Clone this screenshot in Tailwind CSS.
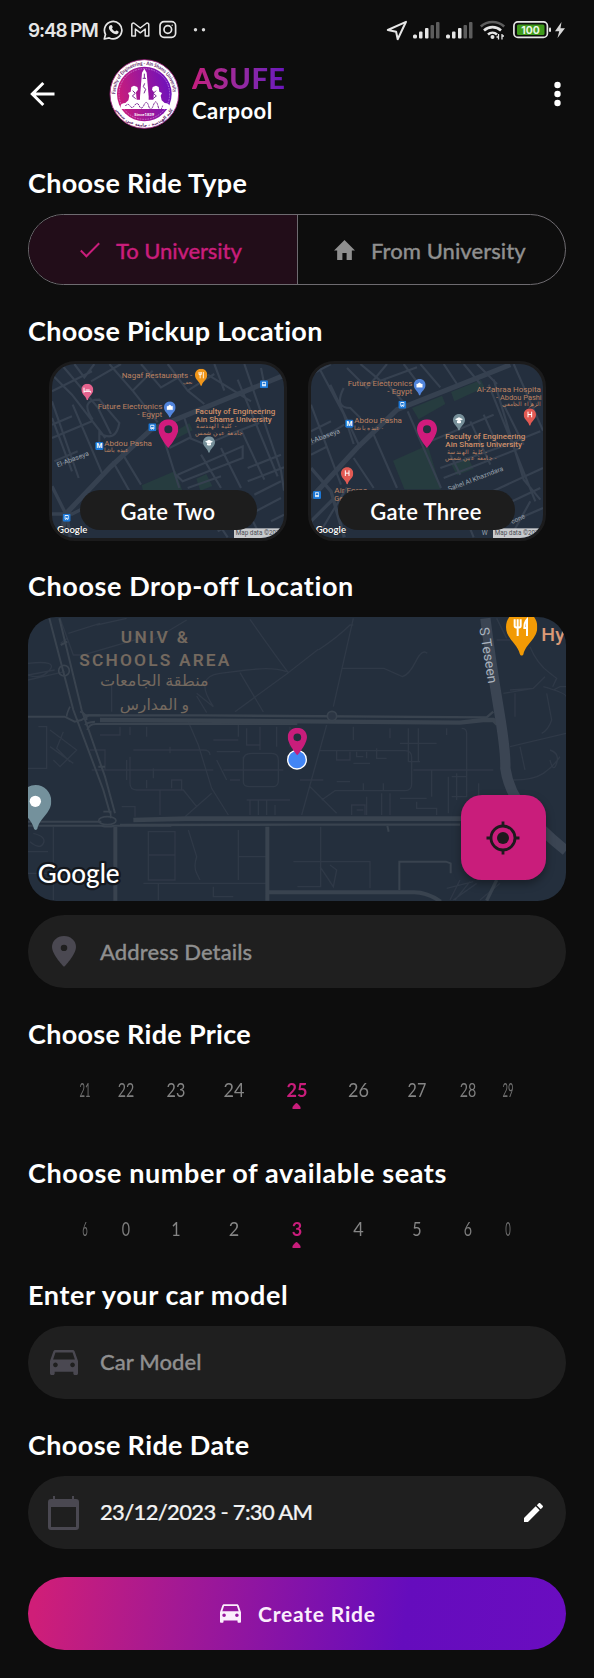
<!DOCTYPE html>
<html lang="en">
<head>
<meta charset="utf-8">
<title>ASUFE Carpool</title>
<script src="https://cdn.jsdelivr.net/npm/@tailwindcss/browser@4"></script>
</head>
<body class="bg-[#0d0d0d] text-white font-['Lato','Noto_Sans',sans-serif]">
<svg class="absolute" width="0" height="0" aria-hidden="true">
  <defs>
    <linearGradient id="brand" x1="0" x2="1" y1="0.2" y2="0"><stop offset="0" stop-color="#c51c7e"/><stop offset="1" stop-color="#6510c2"/></linearGradient>
    <symbol id="pin" viewBox="0 0 60 86"><path fill-rule="evenodd" d="M30 0C13 0 0 13 0 29c0 22 30 57 30 57s30-35 30-57C60 13 47 0 30 0Zm0 18a12 12 0 1 1 0 24 12 12 0 0 1 0-24Z"/></symbol>
    <symbol id="poi" viewBox="0 0 36 50"><path d="M18 0C8 0 0 8 0 18c0 13 13 18 16 30 .6 2 3.400 2 4 0C23 36 36 31 36 18 36 8 28 0 18 0Z"/></symbol>
    <symbol id="car" viewBox="3 5 18 16"><path d="M18.920 6.010C18.720 5.420 18.160 5 17.500 5h-11c-.66 0-1.210.42-1.420 1.010L3 12v8c0 .55.45 1 1 1h1c.55 0 1-.45 1-1v-1h12v1c0 .55.45 1 1 1h1c.55 0 1-.45 1-1v-8l-2.080-5.990zM6.500 16c-.83 0-1.500-.67-1.500-1.500S5.670 13 6.500 13s1.500.67 1.500 1.500S7.330 16 6.500 16zm11 0c-.83 0-1.500-.67-1.500-1.500s.67-1.500 1.500-1.500 1.500.67 1.500 1.500-.67 1.500-1.500 1.500zM5 11l1.500-4.500h11L19 11H5z"/></symbol>
    <symbol id="bus" viewBox="0 0 24 24"><rect width="24" height="24" rx="4" fill="#1d78d6"/><path fill="#e8f2ff" fill-rule="evenodd" d="M6 6q0-2 2-2h8q2 0 2 2v11h-2v2h-2v-2h-4v2H8v-2H6ZM8 7v5h8V7ZM8 14v1h2v-1Zm6 0v1h2v-1Z"/></symbol>
  </defs>
</svg>

<div class="flex flex-col w-[594px] h-[1678px] px-7 overflow-hidden">
  <!-- status bar -->
  <div class="flex justify-between h-[59px] shrink-0">
    <div class="flex pt-[20px] h-[42px] items-center">
      <span class="font-['Inter'] font-semibold text-[19px] leading-6 text-[#e6e6e6] w-[75px] whitespace-nowrap tracking-[-1.150px]">9:48 PM</span>
      <svg class="-mt-[2px]" width="108" height="24" viewBox="0 0 108 24" fill="none" stroke="#e6e6e6" stroke-width="1.700" stroke-linejoin="round" stroke-linecap="round">
        <path d="M1.300 21l1.200-4.700A8.700 8.700 0 1 1 6.200 19.900Z"/>
        <path fill="#e6e6e6" stroke="none" d="M7.400 7.300c1-.8 1.500-.2 2.200 1.400.4.900-.7 1.500-.6 1.900.7 1.400 1.700 2.300 3.100 2.900.4 0 1-1.200 1.500-1 2 .8 2.200 1.200 2 1.700-.9 3.500-5.200 1.800-7.400-.4-2.200-2.100-3.500-5-.8-6.500Z"/>
        <path stroke-width="1.500" d="M28.800 18V6.600c0-1.400 1.700-2 2.700-1.100L37.300 10l5.800-4.500c1-.9 2.700-.3 2.700 1.100V18h-3.600V11l-4.900 3.800L32.400 11v7Z"/>
        <rect x="57" y="3.700" width="15.600" height="15.600" rx="4"/><circle cx="64.800" cy="11.500" r="3.800"/><circle cx="69.200" cy="7.200" r=".7" fill="#e6e6e6" stroke="none"/>
        <g fill="#d8d8d8" stroke="none"><circle cx="92.500" cy="11.700" r="1.700"/><circle cx="100.500" cy="11.700" r="1.700"/></g>
      </svg>
    </div>
    <svg class="mt-[18px]" width="180" height="24" viewBox="386 18 180 24">
      <path d="M387.800 30 406 21.800l-8.300 17.400-1.600-7.500Z" fill="none" stroke="#e6e6e6" stroke-width="2" stroke-linejoin="round"/>
      <g fill="#e6e6e6"><rect x="413" y="34.500" width="4" height="4" rx="1.500"/><rect x="419" y="31.500" width="3.500" height="7" rx="1"/><rect x="425" y="28" width="3.500" height="10.500" rx="1"/><g fill="#5d5d5d"><rect x="430.500" y="25" width="3.500" height="13.500" rx="1"/><rect x="436" y="22" width="3.500" height="16.500" rx="1"/></g></g>
      <g fill="#e6e6e6"><rect x="446" y="34.500" width="4" height="4" rx="1.500"/><rect x="452" y="31.500" width="3.500" height="7" rx="1"/><rect x="458" y="28" width="3.500" height="10.500" rx="1"/><g fill="#5d5d5d"><rect x="463.500" y="25" width="3.500" height="13.500" rx="1"/><rect x="469" y="22" width="3.500" height="16.500" rx="1"/></g></g>
      <g fill="none" stroke-width="2.600"><path stroke="#5d5d5d" d="M480.800 26.500a17.500 17.500 0 0 1 23.400 0"/><path stroke="#e6e6e6" d="M484 30.500a12.500 12.500 0 0 1 17 0M488 34.400a7 7 0 0 1 9 0"/></g>
      <circle cx="492.500" cy="37" r="2" fill="#e6e6e6"/><path stroke="#e6e6e6" stroke-width="1.300" d="M498.500 34v5.500M502 34v5.500M496.500 37h2M502 36h2"/>
      <rect x="513.900" y="21.900" width="33.500" height="15.500" rx="4" fill="none" stroke="#e6e6e6" stroke-width="1.700"/>
      <rect x="517" y="24.500" width="27.500" height="10.500" rx="1.500" fill="#3f9a1c"/><rect x="549" y="27.500" width="2" height="4.500" rx="1" fill="#e6e6e6"/>
      <text x="530.500" y="33.900" font-family="Inter" font-weight="700" font-size="11" text-anchor="middle" textLength="18.500" lengthAdjust="spacingAndGlyphs" fill="#e9f6e2">100</text>
      <path fill="#d8d8d8" d="M561.500 22 555 31.200h4.200L557.500 38l7.500-9.700h-4.500Z"/>
    </svg>
  </div>

  <!-- app bar -->
  <header class="flex items-center h-[70px] shrink-0">
    <svg width="28" height="28" viewBox="28 80 28 28" fill="none" stroke="#fff" stroke-width="3"><path d="M54.500 94H33M43.300 83 32.300 94l11 11"/></svg>
    <svg class="ml-[53px]" width="71" height="70" viewBox="327 177 213 210">
      <defs><path id="arcTop" d="M346 282a87 87 0 0 1 174 0"/><path id="arcBot" d="M335 282a98 98 0 0 0 196 0"/></defs>
      <circle cx="433" cy="282" r="103" fill="#fff" stroke="#a01f7f" stroke-width="2.500"/>
      <circle cx="433" cy="282" r="82" fill="url(#brand)"/>
      <circle cx="433" cy="282" r="76" fill="none" stroke="#e5b8ee" stroke-width="1.500" stroke-dasharray="5 3"/>
      <g font-family="Lato" font-weight="700" font-size="15" fill="#5b1a66">
        <text textLength="268" lengthAdjust="spacingAndGlyphs"><textPath href="#arcTop" textLength="268" lengthAdjust="spacingAndGlyphs">Faculty of Engineering - Ain Shams University</textPath></text>
        <g font-family="DejaVu Sans" font-size="13"><text><textPath href="#arcBot" startOffset="154" text-anchor="middle">كلية الهندسة - جامعة عين شمس</textPath></text></g>
      </g>
      <path fill="#fff" d="M433 206l7 12 6 72v12h-26v-12l6-72Z"/>
      <path fill="#fff" d="M362 327v-10q2-7 14-8l9-8 3-14-4-8 8-4 2-14 8-4 10 4 2 8-6 8 2 22h50l2-22-6-8 2-8 10-4 8 4 2 14 8 4-4 8 3 14 9 8q12 1 14 8v10Z"/>
      <g fill="none" stroke="#7a2a94" stroke-width="3"><path d="M433 221v14M428 235h10M434 250l-4 10 7 8-5 12M398 272l8 8-9 8 10 8M468 272l-8 8 9 8-10 8"/><path d="M376 318q8-10 14 0t14-2 14 2 14-3 14 3 14-2 14 2 14-1" stroke-dasharray="7 2"/></g>
      <text x="433" y="348" font-family="Lato" font-weight="700" font-size="13" text-anchor="middle" fill="#fff" textLength="60">Since1839</text>
    </svg>
    <div class="ml-3 h-full flex flex-col">
      <span class="self-start h-[36px] leading-[38px] text-[29px] font-black tracking-[0.5px] bg-linear-to-r from-[#c51c7e] to-[#6a12bd] bg-clip-text text-transparent">ASUFE</span>
      <span class="self-start leading-7 text-[22px] font-bold mt-[2px] tracking-[0.5px]">Carpool</span>
    </div>
    <svg class="ml-auto mr-[4px]" width="9" height="28" viewBox="0 0 9 28" fill="#fff"><circle cx="4.500" cy="5" r="3.200"/><circle cx="4.500" cy="14" r="3.200"/><circle cx="4.500" cy="23" r="3.200"/></svg>
  </header>

  <h2 class="mt-[35px] h-9 leading-[38px] text-[27px] font-bold shrink-0 tracking-[0.3px]">Choose Ride Type</h2>
  <div class="mt-[14px] h-[71px] shrink-0 rounded-full border-[1.500px] border-[#6e6b70] overflow-hidden grid grid-cols-[269px_1fr] text-[22px] leading-7 font-medium [-webkit-text-stroke:0.3px]">
    <div class="flex items-center bg-[#220d19] text-[#c91d7b] border-r-[1.500px] border-[#6e6b70] pl-[51px] gap-[16px]">
      <svg width="20" height="16" viewBox="0 0 20 16" fill="none" stroke="currentColor" stroke-width="2"><path d="M.8 8.500l5.600 5.700L19.200 1.200"/></svg>
      <span class="mt-[2px] tracking-[-0.1px]">To University</span>
    </div>
    <div class="flex items-center text-[#8f8f8f] pl-[36px] gap-[16px]">
      <svg width="21" height="20" viewBox="2 3 20 17" preserveAspectRatio="none" fill="currentColor"><path d="M10 20v-6h4v6h5v-8h3L12 3 2 12h3v8z"/></svg>
      <span class="mt-[2px] tracking-[0.05px]">From University</span>
    </div>
  </div>

  <h2 class="mt-[27px] h-9 leading-[38px] text-[27px] font-bold shrink-0 tracking-[0.3px]">Choose Pickup Location</h2>
  <div class="mt-[13px] h-[180px] shrink-0 flex gap-[21px] pl-[20.5px]">
    <div class="relative w-[238px] rounded-[26px] border-[3px] border-[#1b1b1c] overflow-hidden bg-[#242f3e]">
      <svg class="block" width="232" height="174" viewBox="33 28 696 522" font-family="Roboto" font-size="22">
        <g fill="#263c3f"><path d="M302 392l102-44 20 60H306Z"/><path d="M395 235l50-30 10 22-52 26Z"/><path d="M466 372l30-14 18 36-36 14Z"/></g>
        <g fill="none" stroke="#364150" stroke-width="6.500">
          <path stroke-width="15" d="M60 548L74 478 210 335 330 225 729 62"/><path stroke-width="10" d="M33 395l45 90 10 63M33 478h60l80-40"/>
          <path d="M33 60l60 60 100 130M60 28l110 130 40 80M100 28l30 40 30-40M33 110l120-60M150 80l90-52M205 28l70 80 60-60M275 108l75 95M300 28l60 70 70-40M380 28l60 80 80-50M440 108l50 40M520 28l30 80M610 28l110 320 9 60M590 75l120 290M660 40l10 50M33 140l80 230M33 190l60 160M95 150l90 210M155 195q-40-60 20-60l60 70q-10 60-60 30v30M215 320l50 88M240 290l60 100M355 210l60 190M430 190l20 60M385 280l60-30 50 20 80-35 80-30M500 60l130 80M410 360l195-85v35l-180 70-20-20M480 300l60 100M540 280l60 120M600 225l70 150M620 340l100-40M620 380l109-42M440 400l100-35M640 420l80-40M530 530l190-100M560 548l-40-60M660 548l-40-80M690 500l39-20"/>
          <path d="M33 250l120-50M33 210l60-25M40 320l70-30"/>
        </g>
        <g fill="#bd8262"><text x="242" y="70" textLength="212" lengthAdjust="spacingAndGlyphs">Nagaf Restaurants -</text><text x="426" y="88" font-size="15">نجف</text>
          <text x="170" y="163" textLength="194" lengthAdjust="spacingAndGlyphs">Future Electronics</text><text x="289" y="187" textLength="75" lengthAdjust="spacingAndGlyphs">- Egypt</text>
          <text x="190" y="273" textLength="143" lengthAdjust="spacingAndGlyphs">Abdou Pasha</text><text x="190" y="292" font-size="17" textLength="74">عبده باشا</text>
          <g fill="#d08f69" font-weight="500"><text x="463" y="177" textLength="240" lengthAdjust="spacingAndGlyphs">Faculty of Engineering</text><text x="463" y="201" textLength="229" lengthAdjust="spacingAndGlyphs">Ain Shams University</text></g>
          <text x="466" y="221" font-size="18" textLength="120">كلية الهندسة -</text><text x="461" y="241" font-size="18" textLength="146">جامعة عين شمس</text></g>
        <text x="50" y="338" transform="rotate(-21 50 338)" fill="#9aa3ae" font-size="20" textLength="102" lengthAdjust="spacingAndGlyphs">El-Abaseya</text>
        <use href="#poi" x="121" y="87" width="36" height="50" fill="#e5638e"/><path d="M129 99v15M129 110h20v4M134 106h12" stroke="#fff" stroke-width="3" fill="none"/>
        <use href="#poi" x="462" y="42" width="37" height="52" fill="#f0961a"/><path d="M474 52v8h7v-8M477.500 52v19M487 71V52" stroke="#fff" stroke-width="2.500" fill="none"/>
        <use href="#poi" x="369" y="140" width="35" height="50" fill="#5184dc"/><path d="M378 155h17v10h-17zM382 155q4-8 9 0" fill="#fff" stroke="#fff"/>
        <use href="#poi" x="486" y="245" width="36" height="50" fill="#77909a"/><path d="M492 261l12-6 12 6-12 6zM498 266v5q6 3 12 0v-5" fill="#fff"/>
        <use href="#bus" x="322" y="206" width="24" height="24"/><use href="#bus" x="657" y="77" width="24" height="24"/><use href="#bus" x="65" y="477" width="24" height="24"/>
        <rect x="163" y="262" width="24" height="24" rx="4" fill="#1d78d6"/><text x="175" y="281" font-weight="700" font-size="20" text-anchor="middle" fill="#fff">M</text>
        <use href="#pin" x="352" y="194" width="60" height="86" fill="#d11b7c"/>
        <text x="48" y="535" font-family="Lato" font-weight="600" font-size="28" fill="#fff" stroke="#20262e" stroke-width="3" paint-order="stroke" textLength="91" lengthAdjust="spacingAndGlyphs">Google</text>
        <rect x="579" y="521" width="150" height="29" fill="#c9cbce"/><text x="584" y="542" font-size="19" fill="#4c4f54" textLength="132" lengthAdjust="spacingAndGlyphs">Map data ©202</text>
      </svg>
      <div class="absolute left-[28px] top-[126px] w-[177px] h-10 rounded-full bg-[#1d1d1d] flex items-center justify-center text-[22px] font-semibold tracking-[0.3px]"><span class="mt-[2px]">Gate Two</span></div>
    </div>
    <div class="relative w-[238px] rounded-[26px] border-[3px] border-[#1b1b1c] overflow-hidden bg-[#242f3e]">
      <svg class="block" width="232" height="174" viewBox="42 28 696 522" font-family="Roboto" font-size="22">
        <g fill="#263c3f"><path d="M288 318l104-46 40 132H322Z"/><path d="M345 160l90-37 10 25-80 46Z"/><path d="M462 112l90-36 10 22-90 42Z"/><path d="M462 328l50-20 18 34-50 20Z"/></g>
        <g fill="none" stroke="#364150" stroke-width="6.500">
          <path stroke-width="15" d="M42 430L180 280 300 165 560 62 640 30"/><path stroke-width="10" d="M42 340l60 70 40 138M42 500l70-70"/>
          <path d="M60 28l80 150 30 90M100 90l90 190M42 60l60-32M150 40l60 60 60-72M42 150l90 240M42 230l60-30M140 100q-30 60 20 60l30 30M190 28l60 50 110-40M260 75l70 80M320 28l60 80M370 28l60 70M440 28l40 60M500 28l50 60M540 28l60 60M590 75l90 300 50 60M575 90l140 350M650 28l88 200M332 170l100 230M230 240l70 160M170 310l60 90M400 260l190-80M430 340l200-70 100-40M440 370l230-90M460 300l30 60M520 200l60 130M560 180l40 90M620 150l60 120M500 450l238-110M540 490l190-90M600 520l138-60M470 400l60 148M700 440l-60 108M42 270l100-60M42 300l50-25M60 548l90-150"/>
        </g>
        <g fill="#bd8262"><text x="152" y="95" textLength="194" lengthAdjust="spacingAndGlyphs">Future Electronics</text><text x="271" y="118" textLength="75" lengthAdjust="spacingAndGlyphs">- Egypt</text>
          <text x="539" y="112" textLength="193" lengthAdjust="spacingAndGlyphs">Al-Zahraa Hospita</text><text x="597" y="135" textLength="137" lengthAdjust="spacingAndGlyphs">- Abdou Pashi</text><text x="614" y="155" font-size="17" textLength="119">الزهراء الجامعي</text>
          <text x="172" y="206" textLength="143" lengthAdjust="spacingAndGlyphs">Abdou Pasha</text><text x="172" y="225" font-size="17" textLength="86">عبده باشا -</text>
          <g fill="#d08f69" font-weight="500"><text x="445" y="254" textLength="240" lengthAdjust="spacingAndGlyphs">Faculty of Engineering</text><text x="445" y="278" textLength="230" lengthAdjust="spacingAndGlyphs">Ain Shams University</text></g>
          <text x="450" y="298" font-size="18" textLength="120">كلية الهندسة -</text><text x="443" y="317" font-size="18" textLength="155">جامعة عين شمس -</text>
          <text x="112" y="414" textLength="98" lengthAdjust="spacingAndGlyphs">Air Force</text><text x="112" y="438">Ge</text></g>
        <g fill="#9aa3ae" font-size="20"><text x="44" y="266" transform="rotate(-20 44 266)" textLength="92" lengthAdjust="spacingAndGlyphs">l-Abaseya</text><text x="456" y="410" transform="rotate(-21 456 410)" textLength="176" lengthAdjust="spacingAndGlyphs">Sahel Al Khazndara</text><text x="646" y="508" transform="rotate(-25 646 508)">cone</text><text x="554" y="540">W</text></g>
        <use href="#poi" x="350" y="73" width="36" height="50" fill="#5184dc"/><path d="M359 88h17v10h-17zM363 88q4-8 9 0" fill="#fff" stroke="#fff"/>
        <use href="#poi" x="468" y="178" width="36" height="50" fill="#77909a"/><path d="M474 194l12-6 12 6-12 6zM480 199v5q6 3 12 0v-5" fill="#fff"/>
        <use href="#poi" x="680" y="161" width="37" height="53" fill="#e25a53"/><use href="#poi" x="132" y="337" width="37" height="53" fill="#e25a53"/>
        <path d="M693 171v17M704 171v17M693 179.500h11M145 347v17M156 347v17M145 355.500h11" stroke="#fff" stroke-width="3"/>
        <use href="#bus" x="304" y="138" width="24" height="24"/><use href="#bus" x="48" y="409" width="24" height="24"/>
        <rect x="145" y="195" width="24" height="24" rx="4" fill="#1d78d6"/><text x="157" y="214" font-weight="700" font-size="20" text-anchor="middle" fill="#fff">M</text>
        <use href="#pin" x="360" y="194" width="60" height="86" fill="#d11b7c"/>
        <text x="56" y="535" font-family="Lato" font-weight="600" font-size="28" fill="#fff" stroke="#20262e" stroke-width="3" paint-order="stroke" textLength="91" lengthAdjust="spacingAndGlyphs">Google</text>
        <rect x="588" y="521" width="150" height="29" fill="#c9cbce"/><text x="593" y="542" font-size="19" fill="#4c4f54" textLength="132" lengthAdjust="spacingAndGlyphs">Map data ©202</text>
      </svg>
      <div class="absolute left-[27px] top-[126px] w-[177px] h-10 rounded-full bg-[#1d1d1d] flex items-center justify-center text-[22px] font-semibold tracking-[0.4px]"><span class="mt-[2px]">Gate Three</span></div>
    </div>
  </div>

  <h2 class="mt-[26px] h-9 leading-[38px] text-[27px] font-bold shrink-0 tracking-[0.6px]">Choose Drop-off Location</h2>
  <div class="relative mt-[14px] h-[284px] shrink-0 rounded-[28px] overflow-hidden bg-[#242f3d]">
    <svg class="block" width="538" height="284" viewBox="84 171 1614 852">
      <g fill="none" stroke="#2f3947" stroke-width="4">
        <path d="M205 220l95-30M182 250l20-15M180 175l40 110h30l170-50M380 175l-90 20M560 180l-100 60M750 178q70 100 115 160l90-70M865 338L705 455M720 338l70 118M590 400l50 40q-60-90 20-100l80-10q80-10 120 5M84 345l80-15M84 310q90-10 65 20t-65 15M84 360l110-25M335 375v80M590 408l30 50"/>
        <path d="M955 270q60-40 95-75h10M1060 175L1000 440M1027 325h125l55 25q20-5 40-45t35-25"/>
        <path d="M115 500h25v125H84M150 510l80 60-50 50-20-20M190 515l-20 50 40 40M150 560l70 50M565 485l30 70 40 130 50 80M270 570h45v60h-40M310 630h330M400 570h210q20 0 20 15M390 590v80q0 20 20 20h140l40 50M480 690v75M635 700l-80 70M380 600v60M440 500v30M390 500v25M510 560v20M440 660v25M460 625v30M515 685v-25h30v30M300 525h60v-25M640 540h75M715 490v40M730 590v75q0 15 20 15h70q15 0 15-20v-60q0-20-20-20h-60q-25 0-25 20M650 575h70M670 630h180M690 660h30M780 500v70M830 500v60M740 505v50h40M750 720v45M775 720v45M800 720v45M825 735v30M740 720h130M870 500v60M650 600l30 60M365 740h40v30"/>
        <path d="M980 495L905 765M930 680l80 80M965 720l40-28h210q20 0 20-20v-80q0-20-20-20H960M900 660h70M1060 500v40M1170 505v30M1225 505v100M1255 505v100M1340 505v20M1200 550h110M1225 605h35M1240 630h240M1295 630v80M1345 650v110M1385 505q15 0 15 15v190M1355 650h45v60h-45M1370 640v80M1010 570v30h40v-25M1070 575v15h20M1100 575v20M1130 565v30h30M1060 610h50M1170 700v65M1145 700v65M1100 710v55M1055 765v-30h40v30M1070 750h20M1250 725v20h60v20M1200 715h80M1010 665h40M1090 670v20M1150 670v20M1436 670v40"/>
        <path d="M445 815h80v145h-80ZM445 885h80M565 810l25 80q-10 30 0 50l10 20M715 810v80h85M715 890v70M160 800v220M84 875h60M100 820q40 10 30 30t-40-5M430 970h370M475 970v50M640 980v30h60M84 940h80M962 800v180h-70M880 905h230v80M960 920l40 60 10-50-20-15"/>
        <path d="M1490 240h40M1490 175l30 60M1590 260q20 50 60 80l20 15-12 25M1510 400l90-15 35-35M1545 400v70M1600 385l-70 5M1630 380q70 20 68 30M1640 400l15 80q-10 30-30 40M1530 560l168-40M1560 560l15 70M1650 570q30 10 20 40t-20-10M1540 660q60 0 90-20t50-50M1660 390l20-10h20M1380 960l-30 60M1410 965l-45 55M1430 970l-70 50M1500 970l-60 50M1340 985l80-20"/>
      </g>
      <g fill="none" stroke="#39434f">
        <path stroke-width="6" d="M148 175L220 450 310 690 330 760M178 175L245 450 315 650 345 760M182 255l20-10M295 620h20M84 470h110l30 15 20-5 22-14H300M84 785h220M84 797h220q20 5 40 0h170"/>
        <path stroke-width="6" d="M255 495q5-8 30-10M262 510q5-20 30-18h600"/>
        <circle cx="192" cy="332" r="16" stroke-width="5"/><ellipse cx="322" cy="782" rx="26" ry="12" stroke-width="5"/><path stroke-width="5" d="M310 755h22v20M210 440q-10 20-10 30M240 455q20 5 20 25"/>
        <path stroke-width="7" d="M250 466H600L1460 472 1480 455"/><path stroke-width="13" d="M300 480L900 484 1380 488 1450 480h30l12 12"/>
        <path stroke-width="7" d="M360 795L900 794H1380"/><path stroke-width="14" d="M400 780L560 776H1390"/><circle cx="996" cy="468" r="14" fill="#2c3644" stroke-width="5"/>
        <path stroke-width="12" d="M346 800v222M802 800v222M802 997h440q40 0 80 28"/><path stroke-width="6" d="M1162 797l4 18M1198 990v-85h140l14 5v30"/><path stroke-width="10" d="M1490 960l-30 62"/>
      </g>
      <path d="M1456 175q18 140 40 270t20 180q10 70 60 130t122 117" fill="none" stroke="#3b4553" stroke-width="31"/>
      <g font-family="Roboto" font-weight="600" font-size="52" fill="#74695f" text-anchor="middle"><text x="463" y="250" textLength="202">UNIV &amp;</text><text x="463" y="319" textLength="450">SCHOOLS AREA</text>
        <g font-family="'Noto Sans','DejaVu Sans'" font-weight="400" font-size="46"><text x="463" y="378" textLength="326" lengthAdjust="spacingAndGlyphs">منطقة الجامعات</text><text x="463" y="450" textLength="208" lengthAdjust="spacingAndGlyphs">و المدارس</text></g></g>
      <text x="1438" y="204" transform="rotate(81 1438 204)" font-family="Roboto" font-size="41" fill="#a9b2bd" textLength="170" lengthAdjust="spacingAndGlyphs">S Teseen</text>
      <svg x="1518" y="152" width="94" height="136" viewBox="0 0 36 50" preserveAspectRatio="none" fill="#f29a05"><use href="#poi" width="36" height="50"/></svg>
      <path d="M1544 178v20q0 5 9 5t9-5v-20M1553 178v50M1581 228v-50q-8 8-8 26h6" fill="none" stroke="#fff" stroke-width="6"/>
      <text x="1624" y="242" font-family="Roboto" font-weight="500" font-size="56" fill="#dc9a77" textLength="70" lengthAdjust="spacingAndGlyphs">Hy</text>
      <svg x="60" y="675" width="94" height="136" viewBox="0 0 36 50" preserveAspectRatio="none" fill="#74919c"><use href="#poi" width="36" height="50"/></svg><circle cx="106" cy="724" r="17" fill="#fff"/>
      <circle cx="891" cy="599" r="28" fill="#4285f4" stroke="#fff" stroke-width="4"/>
      <use href="#pin" x="863" y="503" width="58" height="83" fill="#c91d7b"/>
      <text x="113" y="968" font-family="Lato" font-weight="500" font-size="80" fill="#fff" stroke="#14181e" stroke-width="14" stroke-linejoin="round" paint-order="stroke" textLength="246" lengthAdjust="spacingAndGlyphs">Google</text>
    </svg>
    <div class="absolute right-[20.5px] bottom-[21px] w-[85px] h-[85px] rounded-[21px] bg-[#c91d7b] flex items-center justify-center shadow-[0_4px_8px_rgba(0,0,0,0.35)]">
      <svg width="34" height="34" viewBox="0 0 34 34" fill="none" stroke="#1d1a1d" stroke-width="2.800"><circle cx="17" cy="17" r="12"/><circle cx="17" cy="17" r="6" fill="#1d1a1d" stroke="none"/><path d="M17 .5V5M17 29v4.500M.5 17H5M29 17h4.500"/></svg>
    </div>
  </div>

  <div class="mt-[14px] h-[73px] shrink-0 rounded-full bg-[#1f1f1f] flex items-center pl-6 text-[22px] text-[#8f8f8f] font-medium [-webkit-text-stroke:0.3px]">
    <svg class="w-[24px] mr-[24px]" height="31" viewBox="5 2 14 20" preserveAspectRatio="none" fill="#4a4851"><path d="M12 2C8.130 2 5 5.130 5 9c0 5.250 7 13 7 13s7-7.750 7-13c0-3.870-3.130-7-7-7z"/><ellipse cx="12" cy="9.700" rx="1.900" ry="2" fill="#1f1f1f"/></svg>
    <span class="tracking-[0.1px]">Address Details</span>
  </div>

  <h2 class="mt-[27px] h-9 leading-[38px] text-[27px] font-bold shrink-0 tracking-[0.3px]">Choose Ride Price</h2>
  <div class="relative mt-[10px] h-[58px] shrink-0 grid grid-cols-[40px_42px_58px_58px_68px_55px_62px_40px_40px] pl-[37px] items-center text-center text-[19px] text-[#858585]">
    <span class="scale-x-50 text-[#6f6f6f]">21</span><span class="scale-x-75 text-[#7d7d7d]">22</span><span class="scale-x-85">23</span><span class="scale-x-95">24</span><span class="text-[#c91d7b] font-bold scale-x-95">25</span><span class="scale-x-95">26</span><span class="scale-x-85">27</span><span class="scale-x-75 text-[#7d7d7d]">28</span><span class="scale-x-50 text-[#6f6f6f]">29</span>
    <svg class="absolute left-[264px] top-[42px]" width="9" height="6" viewBox="0 0 9 6" fill="#c91d7b"><path d="M4.500 0Q5.500 0 8.500 4V6h-8V4Q3.500 0 4.500 0Z"/></svg>
  </div>

  <h2 class="mt-[35px] h-9 leading-[38px] text-[27px] font-bold shrink-0 tracking-[0.6px]">Choose number of available seats</h2>
  <div class="relative mt-[10px] h-[58px] shrink-0 grid grid-cols-[40px_42px_58px_58px_68px_55px_62px_40px_40px] pl-[37px] items-center text-center text-[19px] text-[#858585]">
    <span class="scale-x-50 text-[#6f6f6f]">6</span><span class="scale-x-75 text-[#7d7d7d]">0</span><span class="scale-x-85">1</span><span class="scale-x-95">2</span><span class="text-[#c91d7b] font-bold scale-x-95">3</span><span class="scale-x-95">4</span><span class="scale-x-85">5</span><span class="scale-x-75 text-[#7d7d7d]">6</span><span class="scale-x-50 text-[#6f6f6f]">0</span>
    <svg class="absolute left-[264px] top-[42px]" width="9" height="6" viewBox="0 0 9 6" fill="#c91d7b"><path d="M4.500 0Q5.500 0 8.500 4V6h-8V4Q3.500 0 4.500 0Z"/></svg>
  </div>

  <h2 class="mt-[18px] h-9 leading-[38px] text-[27px] font-bold shrink-0 tracking-[0.62px]">Enter your car model</h2>
  <div class="mt-[14px] h-[73px] shrink-0 rounded-full bg-[#1f1f1f] flex items-center pl-[22px] text-[22px] text-[#8f8f8f] font-medium [-webkit-text-stroke:0.3px]">
    <svg class="mr-[22px]" width="28" height="25" fill="#4a4851"><use href="#car"/></svg>
    <span class="-mt-[2px] tracking-[0.1px]">Car Model</span>
  </div>

  <h2 class="mt-[27px] h-9 leading-[38px] text-[27px] font-bold shrink-0 tracking-[0.38px]">Choose Ride Date</h2>
  <div class="mt-[14px] h-[73px] shrink-0 rounded-full bg-[#1f1f1f] flex items-center pl-[20px] pr-[23px] text-[22px] text-[#f2f2f2] font-medium [-webkit-text-stroke:0.2px]">
    <svg class="mr-[21px]" width="31" height="34" viewBox="0 0 31 34" fill="#4a4851"><path fill-rule="evenodd" d="M5 0h2v3h17V0h2v3h2q3 0 3 3v25q0 3-3 3H3q-3 0-3-3V6q0-3 3-3h2ZM3 11v20h25V11Z"/></svg>
    <span class="-mt-[2px] tracking-[-0.66px]">23/12/2023 - 7:30 AM</span>
    <svg class="ml-auto" width="19" height="19" viewBox="3 3 18 18" fill="#fff"><path d="M3 17.250V21h3.750L17.810 9.940l-3.750-3.750L3 17.250zM20.710 7.040c.39-.39.39-1.020 0-1.410l-2.340-2.340c-.39-.39-1.020-.39-1.410 0l-1.830 1.830 3.750 3.750 1.830-1.830z"/></svg>
  </div>

  <button class="mt-[28px] h-[73px] shrink-0 rounded-full bg-[linear-gradient(98deg,#cf1e78_2%,#a31994_28%,#650cbd_70%,#6a0dc0_100%)] flex items-center pl-[192px] text-[21px] font-bold text-[#fbeefc]">
    <svg class="mr-[17px]" width="21" height="19" fill="currentColor"><use href="#car"/></svg>
    <span class="mt-px tracking-[0.8px]">Create Ride</span>
  </button>
</div>
</body>
</html>
